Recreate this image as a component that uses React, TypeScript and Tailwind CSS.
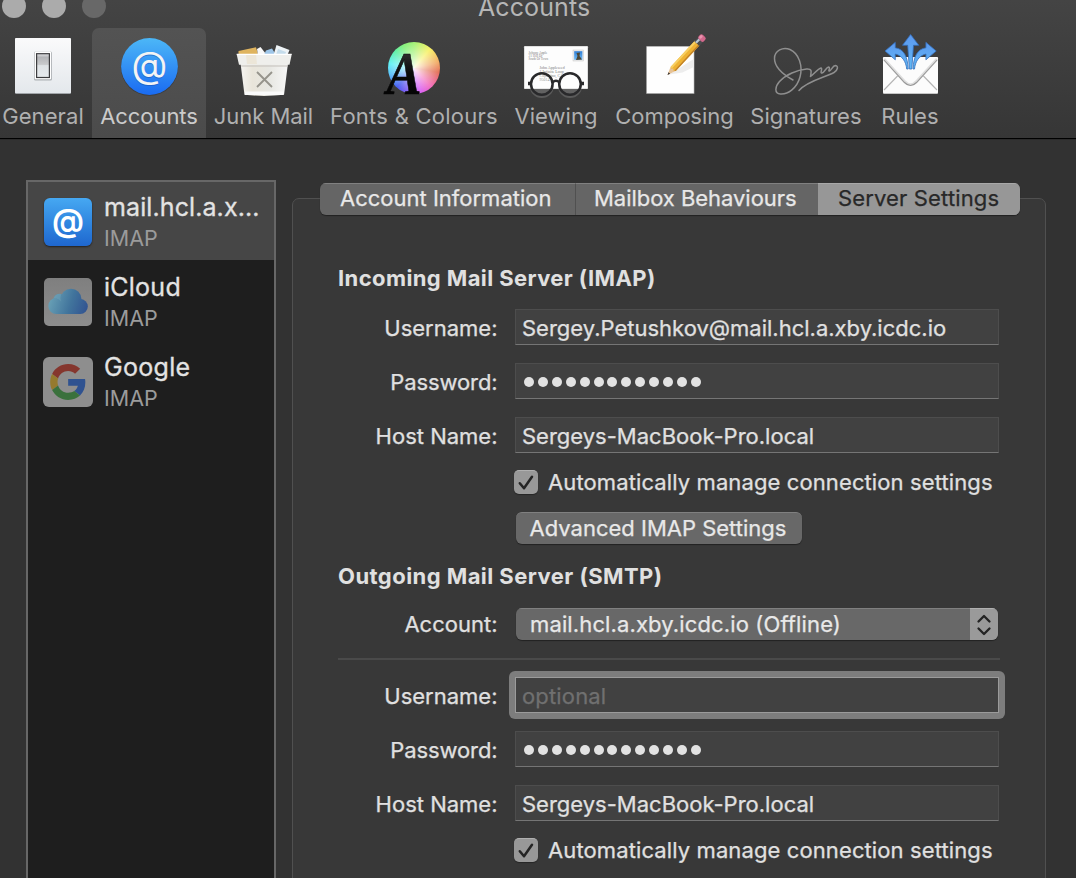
import type { ReactNode } from "react";

function GeneralIcon() {
  return (
    <svg width="72" height="72" viewBox="7 28 72 72">
      <defs>
        <linearGradient id="plate" x1="0" y1="0" x2="0" y2="1">
          <stop offset="0" stopColor="#fafafb" />
          <stop offset="1" stopColor="#e4e8ec" />
        </linearGradient>
        <linearGradient id="rocker" x1="0" y1="0" x2="0" y2="1">
          <stop offset="0" stopColor="#e4e6e8" />
          <stop offset="0.15" stopColor="#b4b5b8" />
          <stop offset="0.45" stopColor="#c9cacc" />
          <stop offset="0.5" stopColor="#dfe3e6" />
          <stop offset="1" stopColor="#e6eaed" />
        </linearGradient>
      </defs>
      <rect x="15" y="38.5" width="56" height="55.5" rx="1" fill="#8b8f92" />
      <rect x="15" y="38" width="56" height="55.2" rx="1" fill="url(#plate)" />
      <rect x="34" y="51.5" width="18" height="29" rx="1.5" fill="#9a9ea2" opacity="0.75" />
      <rect x="34.7" y="51.5" width="16.4" height="27.8" rx="1" fill="#fff" />
      <rect x="36.6" y="53.7" width="12.8" height="23.8" fill="url(#rocker)" stroke="#3c3c3f" strokeWidth="1.2" />
    </svg>
  );
}

function AccountsIcon() {
  return (
    <svg width="72" height="72" viewBox="113 28 72 72">
      <defs>
        <linearGradient id="disc" x1="0" y1="0" x2="0" y2="1">
          <stop offset="0" stopColor="#4cb7f7" />
          <stop offset="1" stopColor="#1a6bf2" />
        </linearGradient>
      </defs>
      <circle cx="149.5" cy="67.2" r="28.6" fill="#3d3d3d" />
      <circle cx="149.5" cy="66.5" r="28.4" fill="url(#disc)" />
      <text x="149.4" y="79.2" textAnchor="middle" fontSize="37" fontFamily="Inter, sans-serif" fill="#1b4fae" opacity="0.5">@</text>
      <text x="149.4" y="78.2" textAnchor="middle" fontSize="37" fontFamily="Inter, sans-serif" fill="#f4f4f4">@</text>
    </svg>
  );
}

function JunkIcon() {
  return (
    <svg width="72" height="72" viewBox="228 28 72 72">
      <defs>
        <linearGradient id="bin" x1="0" y1="0" x2="1" y2="0">
          <stop offset="0" stopColor="#f5f4f1" />
          <stop offset="0.25" stopColor="#e9e5da" />
          <stop offset="0.6" stopColor="#e7e7e2" />
          <stop offset="1" stopColor="#f7f7f7" />
        </linearGradient>
      </defs>
      <path d="M238.5 51 L256 47.3 L258.5 56 L238.5 56Z" fill="#dfb45f" />
      <path d="M257 49 L260.5 47 L266 54 L258 56Z" fill="#f8f8f8" />
      <path d="M266 50.5 L272 48.5 L276 55 L264 55Z" fill="#9fc6e8" />
      <path d="M276.5 45 L289.5 50 L287 56 L273.5 55Z" fill="#eef3f6" />
      <path d="M278 49 L286 52 L285 55 L276 55Z" fill="#c5dceb" />
      <path d="M240.5 63 L288 63 L284 94.8 Q264 97 244.5 94.8Z" fill="url(#bin)" />
      <path d="M241 65 L287.7 65 L287.5 67 L241.2 67Z" fill="#c9c7c2" opacity="0.6" />
      <path d="M236.7 54.4 L291.7 54.4 L289.5 64.8 L239 64.8Z" fill="#efefec" />
      <path d="M236.7 54.4 H291.7" stroke="#fff" strokeWidth="1.2" />
      <path d="M246 55 H256 L257 64 H247Z" fill="#e8dcc2" opacity="0.45" />
      <path d="M245 91.5 L283.8 91.5 L283.5 95 L244.8 95Z" fill="#fafafa" />
      <path d="M257 72 L272 87 M272 72 L257 87" stroke="#96948c" strokeWidth="1.9" />
    </svg>
  );
}

function FontsIcon() {
  return (
    <span className="relative block h-[72px] w-[72px]">
      <span className="absolute top-[14px] left-[10px] h-[52px] w-[52px] rounded-full bg-[radial-gradient(circle,rgba(255,255,255,0.9)_0%,rgba(255,255,255,0.45)_35%,rgba(255,255,255,0)_75%),conic-gradient(from_0deg,#9df06c,#f7f05c_40deg,#f0a25c_78deg,#e2674e_100deg,#f264ba_138deg,#d858f4_165deg,#8a52f5_190deg,#3c54f0_222deg,#52bdfa_255deg,#58f0f4_280deg,#57f0a0_312deg,#7cf072_335deg,#9df06c)]" />
      <svg className="absolute inset-0 overflow-visible" width="72" height="72" viewBox="378 28 72 72">
        <defs>
          <linearGradient id="inkA" x1="0" y1="0" x2="0" y2="1">
            <stop offset="0" stopColor="#444" />
            <stop offset="0.5" stopColor="#0a0a0a" />
            <stop offset="1" stopColor="#000" />
          </linearGradient>
        </defs>
        <text x="386.5" y="94" fontSize="61" fontStyle="italic" fontWeight="700" fontFamily="'Liberation Serif', serif" fill="url(#inkA)" stroke="#0a0a0a" strokeWidth="0.6" textLength="35" lengthAdjust="spacingAndGlyphs">A</text>
      </svg>
    </span>
  );
}

function ViewingIcon() {
  return (
    <svg width="80" height="72" viewBox="516 28 80 72">
      <defs>
        <linearGradient id="stamp" x1="0" y1="0" x2="0" y2="1">
          <stop offset="0" stopColor="#2f7fd6" />
          <stop offset="1" stopColor="#6fb9f4" />
        </linearGradient>
      </defs>
      <rect x="524" y="46" width="64" height="43" rx="1.2" fill="#fdfdfd" />
      <rect x="524.5" y="46.5" width="63" height="42" rx="1" fill="none" stroke="#d7d7d7" strokeWidth="0.8" />
      <rect x="573" y="50" width="10.5" height="11" fill="#ececec" stroke="#c5c5c5" strokeWidth="0.5" />
      <rect x="574.2" y="51.2" width="8.2" height="8.6" fill="url(#stamp)" />
      <path d="M576 60 L577.5 56 L576.5 53 L580 52.5 L579.5 56 L582 59.5Z" fill="#4d4634" />
      <g fill="#7c7c7c" fontFamily="'Liberation Serif', serif">
        <text x="528.5" y="53.5" fontSize="3.4">Johnny Apple</text>
        <text x="528.5" y="56.5" fontSize="3.4">21 Hill Dr</text>
        <text x="528.5" y="59.5" fontSize="3.2">South Of Town</text>
        <text x="539.5" y="69.4" fontSize="4">John Appleseed</text>
        <text x="539.5" y="73.2" fontSize="4">1 Infinite Loop</text>
        <text x="539.5" y="77" fontSize="4">Cupertino, CA</text>
        <text x="539.5" y="80.8" fontSize="4">95014</text>
      </g>
      <path d="M531 86 A10.8 10.8 0 0 0 552.6 86 M559.2 86 A10.8 10.8 0 0 0 580.8 86" fill="none" stroke="#8c8c8c" strokeWidth="2.6" opacity="0.4" />
      <g stroke="#29292b" strokeWidth="2.5">
        <g fill="#fff" fillOpacity="0.2">
          <circle cx="541.8" cy="84" r="10.8" />
          <circle cx="570" cy="84" r="10.8" />
        </g>
        <path d="M552.5 82.5 Q556 79 559.4 82.5" fill="none" />
        <path d="M531 83.5 H528 M580.8 83.5 H584" strokeWidth="3.4" />
      </g>
    </svg>
  );
}

function ComposingIcon() {
  return (
    <svg width="80" height="72" viewBox="634.5 28 80 72">
      <rect x="645.8" y="46.2" width="48" height="47.6" fill="#bdbdbd" />
      <rect x="646.4" y="46.8" width="46.8" height="46.2" fill="#fefefe" />
      <path d="M669 74.5 L693.2 59 V67 L682 72.5Z" fill="#ededed" />
      <g transform="translate(667 75) rotate(-47)">
        <path d="M0 0 L8 -3.3 L9 3.3Z" fill="#e6c296" />
        <path d="M0 0 L2.7 -1.2 L2.7 1.2Z" fill="#3b3631" />
        <path d="M8 -3.3 L44 -3.3 L44 3.3 L8.7 3.3 L7.3 1.2 L8.5 0 L7.3 -1.3Z" fill="#eeb233" />
        <path d="M8 -1.3 H44 V-3.3 H8Z" fill="#f7cf63" />
        <path d="M8.5 3.3 H44 V1.9 H8Z" fill="#c1822a" />
        <rect x="43" y="-3.5" width="5" height="7" fill="#4a4b4d" />
        <rect x="43" y="-2.2" width="5" height="2.2" fill="#b9c7d3" />
        <rect x="47.6" y="-3.6" width="5.8" height="7.2" rx="2" fill="#d2688c" />
        <rect x="48.6" y="-2.8" width="4" height="2.6" rx="1.3" fill="#e993ae" />
      </g>
    </svg>
  );
}

function SignatureIcon() {
  return (
    <svg width="80" height="72" viewBox="766 28 80 72">
      <path
        d="M793 80 C784 75 774.5 67 774.5 58.5 C774.5 50.5 783 46.5 790 49.5 C799 53.5 803 66 800 77 C797 88 788 94.5 780.5 94 C774 93.5 775 86.5 779.5 81.5 C786 74.5 797 70 806.5 69 C813 68.5 811 72.5 810.5 76.5 C814 74 818 68.5 821 68 C823 68.5 819.5 73.5 822 73 C824.5 72.5 826 67.5 828.5 67 C831 67.5 827.5 71.5 829.5 71 C831.5 70.5 832.5 65.5 835.5 65.5 C838.5 66 838 70 834 72.5 C825 77.5 807 81 799 90.5"
        fill="none"
        stroke="#8f8f8f"
        strokeWidth="1.5"
        strokeLinecap="round"
        strokeLinejoin="round"
      />
    </svg>
  );
}

function RulesIcon() {
  return (
    <svg width="72" height="72" viewBox="874 28 72 72">
      <defs>
        <linearGradient id="arrow" x1="0" y1="0" x2="0" y2="1">
          <stop offset="0" stopColor="#5c98ee" />
          <stop offset="1" stopColor="#62baf6" />
        </linearGradient>
      </defs>
      <rect x="883" y="57.3" width="55" height="36.7" rx="1" fill="#c6c6c6" />
      <rect x="883" y="57" width="55" height="36" rx="1" fill="#fcfcfc" />
      <path d="M884 90 L899 74.5 M937 90 L922 74.5" stroke="#b5b5b5" strokeWidth="1.1" />
      <path d="M884 59 L904.5 81.5 Q910.5 87.8 916.5 81.5 L937 59" fill="none" stroke="#dedede" strokeWidth="2.6" />
      <path d="M884 60 L904.5 82.5 Q910.5 88.5 916.5 82.5 L937 60" fill="none" stroke="#999" strokeWidth="1.1" />
      <g fill="url(#arrow)" stroke="#326dbb" strokeWidth="0.8" strokeLinejoin="round">
        <path d="M906.7 69 C906 61.5 902 55.5 895.3 54 L895.3 59.8 L885 51 L895.3 42.3 L895.3 47.8 C904 49 907.5 56.5 908.2 69Z" />
        <path d="M914.5 69 C915.2 61.5 919.2 55.5 925.9 54 L925.9 59.8 L936.2 51 L925.9 42.3 L925.9 47.8 C917.2 49 913.7 56.5 913 69Z" />
        <path d="M909.4 69 L908.5 57 L907.7 45.3 L902.5 45.3 L910.6 34.5 L918.8 45.3 L913.5 45.3 L912.7 57 L911.8 69Z" />
      </g>
    </svg>
  );
}

function Tool({ label, box, text, children }: { label: string; box: string; text: string; children: ReactNode }) {
  return (
    <button className={`flex h-[110px] shrink-0 flex-col items-center ${box}`}>
      {children}
      <span className={`mt-[3px] text-[22px] leading-[26px] whitespace-nowrap ${text}`}>{label}</span>
    </button>
  );
}

function Toolbar() {
  return (
    <header className="h-[140px] shrink-0 overflow-hidden border-b border-[#2b2b2b] bg-linear-to-b from-[#444444] to-[#363636]">
      <div className="flex h-7 gap-4 pl-0.5">
        <i className="-mt-1.5 size-6 shrink-0 rounded-full bg-[#ababab]" />
        <i className="-mt-1.5 size-6 shrink-0 rounded-full bg-[#ababab]" />
        <i className="-mt-1.5 size-6 shrink-0 rounded-full bg-[#686868]" />
        <h1 className="-mt-[9px] ml-[356px] text-[25px] leading-8 tracking-[0.1px] text-[#b6b6b6]">Accounts</h1>
      </div>
      <nav className="flex border-b border-black">
        <Tool label="General" box="mr-1.5 w-[86px]" text="text-[#b0b0b0] tracking-[0.1px]"><GeneralIcon /></Tool>
        <Tool label="Accounts" box="w-[114px] rounded-t-[7px] bg-linear-to-b from-[#535353] to-[#4b4b4b]" text="text-[#cbcbcb] tracking-[-0.07px]"><AccountsIcon /></Tool>
        <Tool label="Junk Mail" box="w-[115px]" text="text-[#b0b0b0] tracking-[-0.05px]"><JunkIcon /></Tool>
        <Tool label="Fonts & Colours" box="ml-px w-[184px]" text="text-[#b0b0b0] tracking-[0.25px]"><FontsIcon /></Tool>
        <Tool label="Viewing" box="w-[100px]" text="text-[#b0b0b0]"><ViewingIcon /></Tool>
        <Tool label="Composing" box="w-[137px]" text="text-[#b0b0b0]"><ComposingIcon /></Tool>
        <Tool label="Signatures" box="w-[126px]" text="text-[#b0b0b0] tracking-[0.05px]"><SignatureIcon /></Tool>
        <Tool label="Rules" box="w-[82px]" text="text-[#b0b0b0] tracking-[0.1px]"><RulesIcon /></Tool>
      </nav>
    </header>
  );
}

function MailTile() {
  return (
    <span className="flex size-12 items-center justify-center rounded-[6px] bg-linear-to-b from-[#46a8f2] to-[#1f67cf] shadow-[0_1px_2px_#0008]">
      <span className="-mt-[3px] text-[32px] leading-none font-semibold text-white">@</span>
    </span>
  );
}

function CloudTile() {
  return (
    <svg width="48" height="48" viewBox="0 0 48 48">
      <defs>
        <linearGradient id="tile" x1="0" y1="0" x2="0" y2="1">
          <stop offset="0" stopColor="#7f7f7f" />
          <stop offset="1" stopColor="#8d8d8d" />
        </linearGradient>
        <linearGradient id="cloud" gradientUnits="userSpaceOnUse" x1="4" y1="20" x2="44" y2="33">
          <stop offset="0" stopColor="#6ba3b7" />
          <stop offset="0.55" stopColor="#41749c" />
          <stop offset="1" stopColor="#305190" />
        </linearGradient>
      </defs>
      <rect width="48" height="48" rx="5" fill="url(#tile)" />
      <g fill="url(#cloud)">
        <circle cx="12.3" cy="28" r="8" />
        <circle cx="15.5" cy="21.8" r="6" />
        <circle cx="27" cy="21.2" r="10.5" />
        <circle cx="36.3" cy="28.5" r="7.5" />
        <rect x="12" y="21" width="24.5" height="15" />
      </g>
      <path d="M9.7 20 A6 6 0 0 1 17.3 16 A11 11 0 0 0 17 23.5 A8.5 8.5 0 0 0 9.7 20Z" fill="#74a4b8" opacity="0.45" />
    </svg>
  );
}

function GoogleTile() {
  return (
    <svg width="50" height="50" viewBox="0 0 50 50">
      <rect width="50" height="50" rx="6" fill="#8e8e8e" />
      <g transform="translate(7.2 7) scale(0.748)">
        <path fill="#85362e" d="M24 9.5c3.54 0 6.71 1.22 9.21 3.6l6.85-6.85C35.9 2.38 30.47 0 24 0 14.62 0 6.51 5.38 2.56 13.22l7.98 6.19C12.43 13.72 17.74 9.5 24 9.5z" />
        <path fill="#2f5290" d="M46.98 24.55c0-1.57-.15-3.09-.38-4.55H24v9.02h12.94c-.58 2.96-2.26 5.48-4.78 7.18l7.73 6c4.51-4.18 7.09-10.36 7.09-17.65z" />
        <path fill="#957a2e" d="M10.53 28.59c-.48-1.45-.76-2.99-.76-4.59s.27-3.14.76-4.59l-7.98-6.19C.92 16.46 0 20.12 0 24c0 3.88.92 7.54 2.56 10.78l7.97-6.19z" />
        <path fill="#3a713d" d="M24 48c6.48 0 11.93-2.13 15.89-5.81l-7.73-6c-2.15 1.45-4.92 2.3-8.16 2.3-6.26 0-11.57-4.22-13.47-9.91l-7.98 6.19C6.51 42.62 14.62 48 24 48z" />
      </g>
    </svg>
  );
}

function Account({ name, row, tracking, children }: { name: string; row: string; tracking: string; children: ReactNode }) {
  return (
    <li className={`flex gap-[11px] ${row}`}>
      <span className="flex h-[50px] w-[50px] shrink-0 items-center justify-center">{children}</span>
      <span className="flex flex-col">
        <span className={`-mt-1 text-[25px] leading-7 whitespace-nowrap text-[#e3e3e3] [-webkit-text-stroke:0.3px] ${tracking}`}>{name}</span>
        <span className="mt-[3px] text-[21.5px] leading-7 text-[#9b9b9b]">IMAP</span>
      </span>
    </li>
  );
}

function Sidebar() {
  return (
    <ul className="mt-10 ml-[26px] h-[740px] w-[250px] shrink-0 border-2 border-[#676767] bg-[#1e1e1e]">
      <Account name="mail.hcl.a.x..." row="h-[78px] bg-[#464646] pt-[15px] pl-[15px]" tracking="tracking-[0.1px]"><MailTile /></Account>
      <Account name="iCloud" row="h-20 pt-[17px] pl-[15px]" tracking="tracking-[0.25px]"><CloudTile /></Account>
      <Account name="Google" row="h-20 pt-[17px] pl-[15px]" tracking="tracking-[0.3px]"><GoogleTile /></Account>
    </ul>
  );
}

const fieldBox = "h-9 w-[484px] border border-[#4d4d4d] border-b-[#757575] bg-[#414141]";

function Row({ label, tracking = "", children }: { label: string; tracking?: string; children: ReactNode }) {
  return (
    <div className="flex">
      <span className={`mt-1 w-[161px] shrink-0 pr-[1.5px] text-right leading-[30px] whitespace-nowrap ${tracking}`}>{label}</span>
      <div className="ml-4">{children}</div>
    </div>
  );
}

function Field({ value }: { value: string }) {
  return <div className={`${fieldBox} pt-[3px] pl-1.5 leading-[30px]`}>{value}</div>;
}

function PasswordField() {
  return (
    <div className={`${fieldBox} flex items-center gap-[3.92px] pt-0.5 pl-2`}>
      {Array.from({ length: 13 }, (_, i) => (
        <i key={i} className="size-2.5 shrink-0 rounded-full bg-[#e2e2e2]" />
      ))}
    </div>
  );
}

function AutoManage() {
  return (
    <label className="ml-44 flex h-6 items-center">
      <span className="flex size-6 items-center justify-center rounded-[5px] border-t border-[#b0b0b0] bg-[#989898] shadow-[0_1px_1px_#0005]">
        <svg width="18" height="18" viewBox="0 0 18 18">
          <path d="M2.8 9.3 L7 14.3 L15 2.8" fill="none" stroke="#242424" strokeWidth="2.5" strokeLinecap="round" strokeLinejoin="round" />
        </svg>
      </span>
      <span className="ml-2.5 tracking-[0.11px] whitespace-nowrap">Automatically manage connection settings</span>
    </label>
  );
}

function Tabs() {
  return (
    <div className="relative z-10 ml-7 flex h-8 w-[700px] overflow-hidden rounded-[6px] bg-[#656565] text-[22px] leading-7 text-[#e8e8e8] shadow-[0_1px_1px_#0006] [-webkit-text-stroke:0.25px]">
      <button className="w-[256px] border-t border-r border-t-[#808080] border-r-[#505050] pb-[3px] pl-5 text-left">Account Information</button>
      <button className="w-[242px] border-t border-t-[#808080] pb-[3px] pl-[18px] text-left tracking-[-0.04px]">Mailbox Behaviours</button>
      <button className="w-[202px] border-t border-t-[#a8a8a8] bg-[#979797] pb-[3px] pl-5 text-left tracking-[0.15px] text-[#282828]">Server Settings</button>
    </div>
  );
}

function ServerSettings() {
  return (
    <section className="-mt-[17px] h-[720px] w-[754px] rounded-[7px] border border-[#505050] bg-[#383838] pt-16 pl-[45px] text-[22px] leading-[30px] text-[#e0e0e0] [-webkit-text-stroke:0.25px]">
      <h2 className="h-[46px] font-bold tracking-[0.4px] [-webkit-text-stroke:0]">Incoming Mail Server (IMAP)</h2>
      <div className="flex flex-col gap-[18px]">
        <Row label="Username:"><Field value="Sergey.Petushkov@mail.hcl.a.xby.icdc.io" /></Row>
        <Row label="Password:" tracking="tracking-[-0.1px]"><PasswordField /></Row>
        <Row label="Host Name:"><Field value="Sergeys-MacBook-Pro.local" /></Row>
      </div>
      <div className="mt-[17px]"><AutoManage /></div>
      <button className="mt-[18px] ml-[178px] block h-8 w-[286px] rounded-[6px] border-t border-[#808080] bg-[#686868] pr-0.5 pb-px leading-7 text-[#e8e8e8] shadow-[0_1px_1px_#0006]">Advanced IMAP Settings</button>
      <h2 className="mt-[17px] font-bold tracking-[0.45px] [-webkit-text-stroke:0]">Outgoing Mail Server (SMTP)</h2>
      <div className="mt-[17px] flex">
        <span className="mt-px w-[161px] pr-[1.5px] text-right">Account:</span>
        <div className="ml-[17px] flex h-8 w-[482px] overflow-hidden rounded-[6px] bg-[#686868] text-[#e8e8e8] shadow-[0_1px_1px_#0006]">
          <span className="flex-1 border-t border-[#808080] pl-3.5 tracking-[0.13px]">mail.hcl.a.xby.icdc.io (Offline)</span>
          <span className="flex w-7 items-center justify-center border-t border-[#b0b0b0] bg-[#9a9a9a]">
            <svg width="16" height="24" viewBox="0 0 16 24">
              <path d="M2.5 8.500 L8 3 L13.5 8.500 M2.5 15.5 L8 21 L13.5 15.5" fill="none" stroke="#242424" strokeWidth="2.3" strokeLinecap="round" strokeLinejoin="round" />
            </svg>
          </span>
        </div>
      </div>
      <hr className="mt-[18px] h-0.5 w-[662px] border-0 bg-[#4a4a4a]" />
      <div className="mt-[17px] flex flex-col gap-[18px]">
        <Row label="Username:">
          <div className="-m-1.5 rounded-[6px] bg-[#7d7d7d] p-1.5">
            <div className="h-9 w-[484px] border border-[#9b9b9b] bg-[#414141] pt-[3px] pl-1.5 tracking-[0.15px] text-[#707070]">optional</div>
          </div>
        </Row>
        <Row label="Password:" tracking="tracking-[-0.1px]"><PasswordField /></Row>
        <Row label="Host Name:"><Field value="Sergeys-MacBook-Pro.local" /></Row>
      </div>
      <div className="mt-[17px]"><AutoManage /></div>
    </section>
  );
}

export default function App() {
  return (
    <div className="flex h-[878px] w-[1076px] flex-col overflow-hidden bg-[#323232] font-['Inter',sans-serif]">
      <Toolbar />
      <main className="flex">
        <Sidebar />
        <div className="mt-[43px] ml-4">
          <Tabs />
          <ServerSettings />
        </div>
      </main>
    </div>
  );
}
